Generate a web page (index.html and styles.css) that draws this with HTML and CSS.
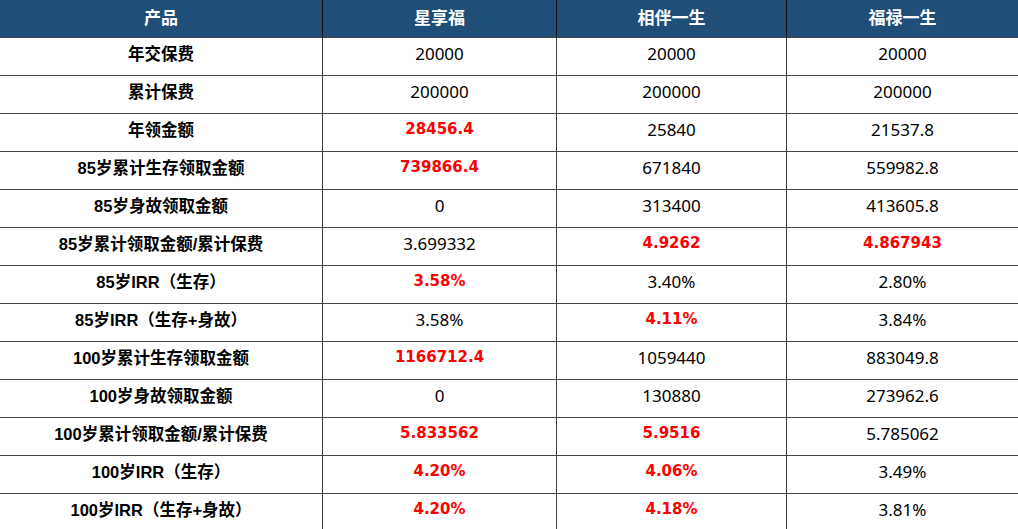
FILE: index.html
```html
<!DOCTYPE html>
<html lang="zh">
<head>
<meta charset="utf-8">
<link rel="stylesheet" href="styles.css">
</head>
<body>
<div class="table">
  <div class="cell head">产品</div>
  <div class="cell head">星享福</div>
  <div class="cell head">相伴一生</div>
  <div class="cell head last">福禄一生</div>

  <div class="cell label">年交保费</div>
  <div class="cell num">20000</div>
  <div class="cell num">20000</div>
  <div class="cell num last">20000</div>

  <div class="cell label">累计保费</div>
  <div class="cell num">200000</div>
  <div class="cell num">200000</div>
  <div class="cell num last">200000</div>

  <div class="cell label">年领金额</div>
  <div class="cell red">28456.4</div>
  <div class="cell num">25840</div>
  <div class="cell num last">21537.8</div>

  <div class="cell label">85岁累计生存领取金额</div>
  <div class="cell red">739866.4</div>
  <div class="cell num">671840</div>
  <div class="cell num last">559982.8</div>

  <div class="cell label">85岁身故领取金额</div>
  <div class="cell num">0</div>
  <div class="cell num">313400</div>
  <div class="cell num last">413605.8</div>

  <div class="cell label">85岁累计领取金额/累计保费</div>
  <div class="cell num">3.699332</div>
  <div class="cell red">4.9262</div>
  <div class="cell red last">4.867943</div>

  <div class="cell label">85岁IRR（生存）</div>
  <div class="cell red">3.58%</div>
  <div class="cell num">3.40%</div>
  <div class="cell num last">2.80%</div>

  <div class="cell label">85岁IRR（生存+身故）</div>
  <div class="cell num">3.58%</div>
  <div class="cell red">4.11%</div>
  <div class="cell num last">3.84%</div>

  <div class="cell label">100岁累计生存领取金额</div>
  <div class="cell red">1166712.4</div>
  <div class="cell num">1059440</div>
  <div class="cell num last">883049.8</div>

  <div class="cell label">100岁身故领取金额</div>
  <div class="cell num">0</div>
  <div class="cell num">130880</div>
  <div class="cell num last">273962.6</div>

  <div class="cell label">100岁累计领取金额/累计保费</div>
  <div class="cell red">5.833562</div>
  <div class="cell red">5.9516</div>
  <div class="cell num last">5.785062</div>

  <div class="cell label">100岁IRR（生存）</div>
  <div class="cell red">4.20%</div>
  <div class="cell red">4.06%</div>
  <div class="cell num last">3.49%</div>

  <div class="cell label">100岁IRR（生存+身故）</div>
  <div class="cell red">4.20%</div>
  <div class="cell red">4.18%</div>
  <div class="cell num last">3.81%</div>
</div>
</body>
</html>
```
FILE: styles.css
```css
html, body {
  margin: 0;
  padding: 0;
  background: #ffffff;
  overflow: hidden;
}
.table {
  display: grid;
  grid-template-columns: 323px 234px 230px 231px;
  grid-auto-rows: 38px;
  width: 1018px;
}
.cell {
  display: flex;
  align-items: center;
  justify-content: center;
  box-sizing: border-box;
  border-right: 1px solid #3f3f3f;
  border-bottom: 1px solid #454545;
  padding-bottom: 7px;
  white-space: nowrap;
  color: #000;
}
.cell.last {
  border-right: none;
}
.head {
  background: #1f4e79;
  color: #ffffff;
  font-family: "Liberation Sans", "Noto Sans CJK SC", sans-serif;
  font-weight: bold;
  font-size: 17px;
  padding-bottom: 4px;
  border-right-color: #111;
}
.label {
  font-family: "Liberation Sans", "Noto Sans CJK SC", sans-serif;
  font-weight: bold;
  font-size: 16.5px;
}
.num {
  font-family: "Noto Sans", "Noto Sans CJK SC", sans-serif;
  font-size: 17px;
}
.red {
  font-family: "DejaVu Sans", sans-serif;
  font-weight: bold;
  font-size: 15px;
  color: #ff0000;
}
```
